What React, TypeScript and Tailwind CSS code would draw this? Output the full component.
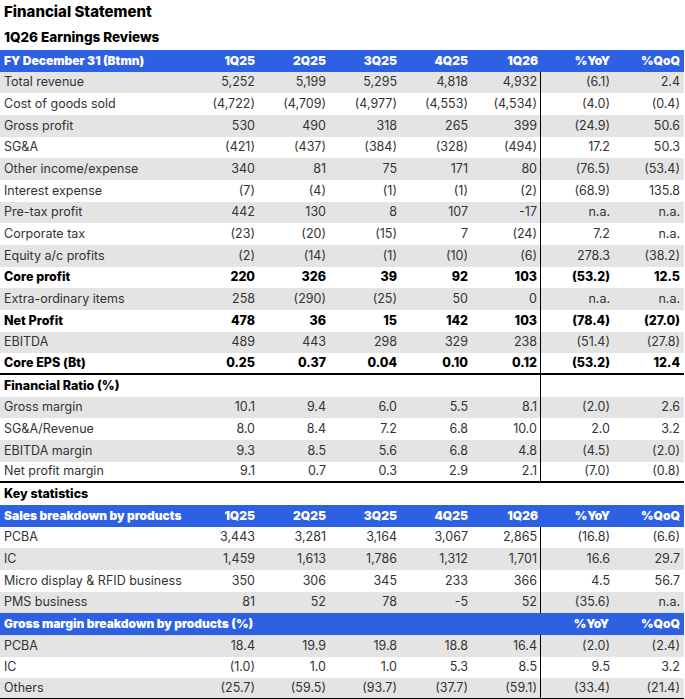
import React from "react";

type Row = {
  label: string;
  v: string[];
  gray?: boolean;
  bold?: boolean;
  last?: "thick" | "none";
};

const GRID = "grid grid-cols-[186px_71px_71px_71px_71px_71px_71px_71px] w-[684px]";
const ROWH = "h-[21.68px]";

const main: Row[] = [
  { label: "Total revenue", v: ["5,252", "5,199", "5,295", "4,818", "4,932", "(6.1)", "2.4"], gray: true },
  { label: "Cost of goods sold", v: ["(4,722)", "(4,709)", "(4,977)", "(4,553)", "(4,534)", "(4.0)", "(0.4)"] },
  { label: "Gross profit", v: ["530", "490", "318", "265", "399", "(24.9)", "50.6"], gray: true },
  { label: "SG&A", v: ["(421)", "(437)", "(384)", "(328)", "(494)", "17.2", "50.3"] },
  { label: "Other income/expense", v: ["340", "81", "75", "171", "80", "(76.5)", "(53.4)"], gray: true },
  { label: "Interest expense", v: ["(7)", "(4)", "(1)", "(1)", "(2)", "(68.9)", "135.8"] },
  { label: "Pre-tax profit", v: ["442", "130", "8", "107", "-17", "n.a.", "n.a."], gray: true },
  { label: "Corporate tax", v: ["(23)", "(20)", "(15)", "7", "(24)", "7.2", "n.a."] },
  { label: "Equity a/c profits", v: ["(2)", "(14)", "(1)", "(10)", "(6)", "278.3", "(38.2)"], gray: true },
  { label: "Core profit", v: ["220", "326", "39", "92", "103", "(53.2)", "12.5"], bold: true },
  { label: "Extra-ordinary items", v: ["258", "(290)", "(25)", "50", "0", "n.a.", "n.a."], gray: true },
  { label: "Net Profit", v: ["478", "36", "15", "142", "103", "(78.4)", "(27.0)"], bold: true },
  { label: "EBITDA", v: ["489", "443", "298", "329", "238", "(51.4)", "(27.8)"], gray: true },
  { label: "Core EPS (Bt)", v: ["0.25", "0.37", "0.04", "0.10", "0.12", "(53.2)", "12.4"], bold: true, last: "thick" },
];

const ratio: Row[] = [
  { label: "Gross margin", v: ["10.1", "9.4", "6.0", "5.5", "8.1", "(2.0)", "2.6"], gray: true },
  { label: "SG&A/Revenue", v: ["8.0", "8.4", "7.2", "6.8", "10.0", "2.0", "3.2"] },
  { label: "EBITDA margin", v: ["9.3", "8.5", "5.6", "6.8", "4.8", "(4.5)", "(2.0)"], gray: true },
  { label: "Net profit margin", v: ["9.1", "0.7", "0.3", "2.9", "2.1", "(7.0)", "(0.8)"], last: "thick" },
];

const sales: Row[] = [
  { label: "PCBA", v: ["3,443", "3,281", "3,164", "3,067", "2,865", "(16.8)", "(6.6)"] },
  { label: "IC", v: ["1,459", "1,613", "1,786", "1,312", "1,701", "16.6", "29.7"], gray: true },
  { label: "Micro display & RFID business", v: ["350", "306", "345", "233", "366", "4.5", "56.7"] },
  { label: "PMS business", v: ["81", "52", "78", "-5", "52", "(35.6)", "n.a."], gray: true },
];

const gm: Row[] = [
  { label: "PCBA", v: ["18.4", "19.9", "19.8", "18.8", "16.4", "(2.0)", "(2.4)"], gray: true },
  { label: "IC", v: ["(1.0)", "1.0", "1.0", "5.3", "8.5", "9.5", "3.2"] },
  { label: "Others", v: ["(25.7)", "(59.5)", "(93.7)", "(37.7)", "(59.1)", "(33.4)", "(21.4)"], gray: true, last: "thick" },
];

function DataRow({ r }: { r: Row }) {
  const bg = r.gray ? "bg-[#e4e4e4]" : "bg-white";
  const txt = r.bold ? "font-extrabold text-black" : "font-normal text-[#333333]";
  const border = r.last === "thick" ? "border-b-2 border-black" : "";
  return (
    <div className={`${GRID} ${ROWH} ${bg} ${txt} ${border} text-[12.5px] leading-none`}>
      <div className="pl-1 flex items-center whitespace-nowrap">{r.label}</div>
      {r.v.map((x, i) => (
        <div
          key={i}
          className={`flex items-center justify-end ${i === 4 ? "pr-[3px] border-r border-black" : i === 6 ? "pr-[3px]" : "pr-[2px]"}`}
        >
          {x}
        </div>
      ))}
    </div>
  );
}

function BlueHeader({ label, cols }: { label: string; cols: string[] }) {
  return (
    <div className={`${GRID} ${ROWH} bg-[#2d60e3] text-white font-black text-[12px] leading-none`}>
      {cols.length === 7 ? (
        <>
          <div className="pl-1 flex items-center whitespace-nowrap">{label}</div>
          {cols.map((c, i) => (
            <div key={i} className={`flex items-center justify-end ${i === 4 || i === 6 ? "pr-[3px]" : "pr-[2px]"}`}>
              {c}
            </div>
          ))}
        </>
      ) : (
        <>
          <div className="col-span-6 pl-1 flex items-center whitespace-nowrap">{label}</div>
          {cols.map((c, i) => (
            <div key={i} className="flex items-center justify-end pr-[3px]">
              {c}
            </div>
          ))}
        </>
      )}
    </div>
  );
}

function SectionRow({ label, line }: { label: string; line?: boolean }) {
  return (
    <div className={`${GRID} ${ROWH} bg-white text-black font-extrabold text-[12.5px] leading-none`}>
      <div className="col-span-5 pl-1 flex items-center whitespace-nowrap">{label}</div>
      <div className={line ? "border-r border-black" : ""}></div>
      <div></div>
      <div></div>
    </div>
  );
}

export default function App() {
  const q = ["1Q25", "2Q25", "3Q25", "4Q25", "1Q26", "%YoY", "%QoQ"];
  return (
    <div className="w-[685px] h-[699px] bg-white overflow-hidden" style={{ fontFamily: "Inter, 'Liberation Sans', sans-serif" }}>
      <div className="h-[25px] flex items-center pl-1 text-[15px] font-extrabold text-black">
        Financial Statement
      </div>
      <div className="h-[25px] flex items-center pl-1 text-[13.5px] font-extrabold text-black">
        1Q26 Earnings Reviews
      </div>
      <BlueHeader label="FY December 31 (Btmn)" cols={q} />
      {main.map((r, i) => (
        <DataRow key={i} r={r} />
      ))}
      <SectionRow label="Financial Ratio (%)" line />
      {ratio.map((r, i) => (
        <DataRow key={i} r={r} />
      ))}
      <SectionRow label="Key statistics" />
      <BlueHeader label="Sales breakdown by products" cols={q} />
      {sales.map((r, i) => (
        <DataRow key={i} r={r} />
      ))}
      <BlueHeader label="Gross margin breakdown by products (%)" cols={["%YoY", "%QoQ"]} />
      {gm.map((r, i) => (
        <DataRow key={i} r={r} />
      ))}
    </div>
  );
}
